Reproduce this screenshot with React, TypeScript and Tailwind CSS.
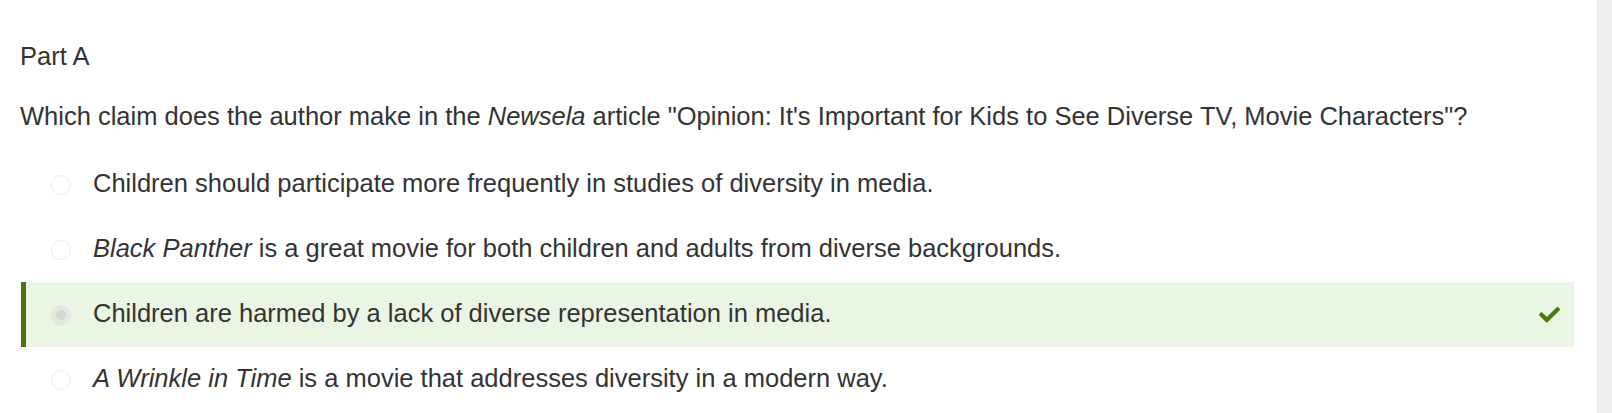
import React from 'react';

type Option = {
  id: string;
  content: React.ReactNode;
  selected?: boolean;
  correct?: boolean;
};

const options: Option[] = [
  {
    id: 'a',
    content: <>Children should participate more frequently in studies of diversity in media.</>,
  },
  {
    id: 'b',
    content: (
      <>
        <i>Black Panther</i> is a great movie for both children and adults from diverse backgrounds.
      </>
    ),
  },
  {
    id: 'c',
    content: <>Children are harmed by a lack of diverse representation in media.</>,
    selected: true,
    correct: true,
  },
  {
    id: 'd',
    content: (
      <>
        <i>A Wrinkle in Time</i> is a movie that addresses diversity in a modern way.
      </>
    ),
  },
];

function CheckIcon() {
  return (
    <svg width="21" height="17" viewBox="0 0 512 400" className="fill-[#4a7a12]">
      <path d="M173.9 389.1L7.5 222.7c-10-10-10-26.2 0-36.2l36.2-36.2c10-10 26.2-10 36.2 0L192 262.4 432.1 22.3c10-10 26.2-10 36.2 0l36.2 36.2c10 10 10 26.2 0 36.2L210.1 389.1c-10 10-26.2 10-36.2 0z" />
    </svg>
  );
}

function Radio({ selected }: { selected?: boolean }) {
  return (
    <span
      className={`flex h-[20px] w-[20px] shrink-0 items-center justify-center rounded-full border ${
        selected ? 'border-[#e2e8dc] bg-[#e4e7e2]' : 'border-[#ececec] bg-white'
      }`}
    >
      {selected && <span className="h-[10px] w-[10px] rounded-full bg-[#d3d6d1]" />}
    </span>
  );
}

function OptionRow({ option }: { option: Option }) {
  const highlighted = option.selected && option.correct;
  return (
    <div
      className={`flex h-[65px] items-center border-l-[5px] pl-[25px] pr-[14px] ${
        highlighted ? 'border-[#4b7312] bg-[#ebf5e4]' : 'border-transparent'
      }`}
    >
      <Radio selected={option.selected} />
      <span className="ml-[22px] flex-1 pb-[3px] text-[25.5px] leading-[30px] text-[#333333]">{option.content}</span>
      {highlighted && <CheckIcon />}
    </div>
  );
}

export default function App() {
  return (
    <div className="flex h-[413px] w-[1612px] overflow-hidden bg-white font-['Liberation_Sans',Arial,sans-serif]">
      <div className="flex-1 pl-[20px] pr-[23px]">
        <div className="pt-[41px] text-[25.5px] leading-[30px] text-[#333333]">Part A</div>
        <p className="mt-[30px] text-[25.5px] leading-[30px] text-[#333333]">
          Which claim does the author make in the <i>Newsela</i> article "Opinion: It's Important for
          Kids to See Diverse TV, Movie Characters"?
        </p>
        <div className="mt-[21px] ml-[1px]">
          {options.map((o) => (
            <OptionRow key={o.id} option={o} />
          ))}
        </div>
      </div>
      <div className="w-[15px] border-l border-[#e6e6e6] bg-[#efefef]" />
    </div>
  );
}
